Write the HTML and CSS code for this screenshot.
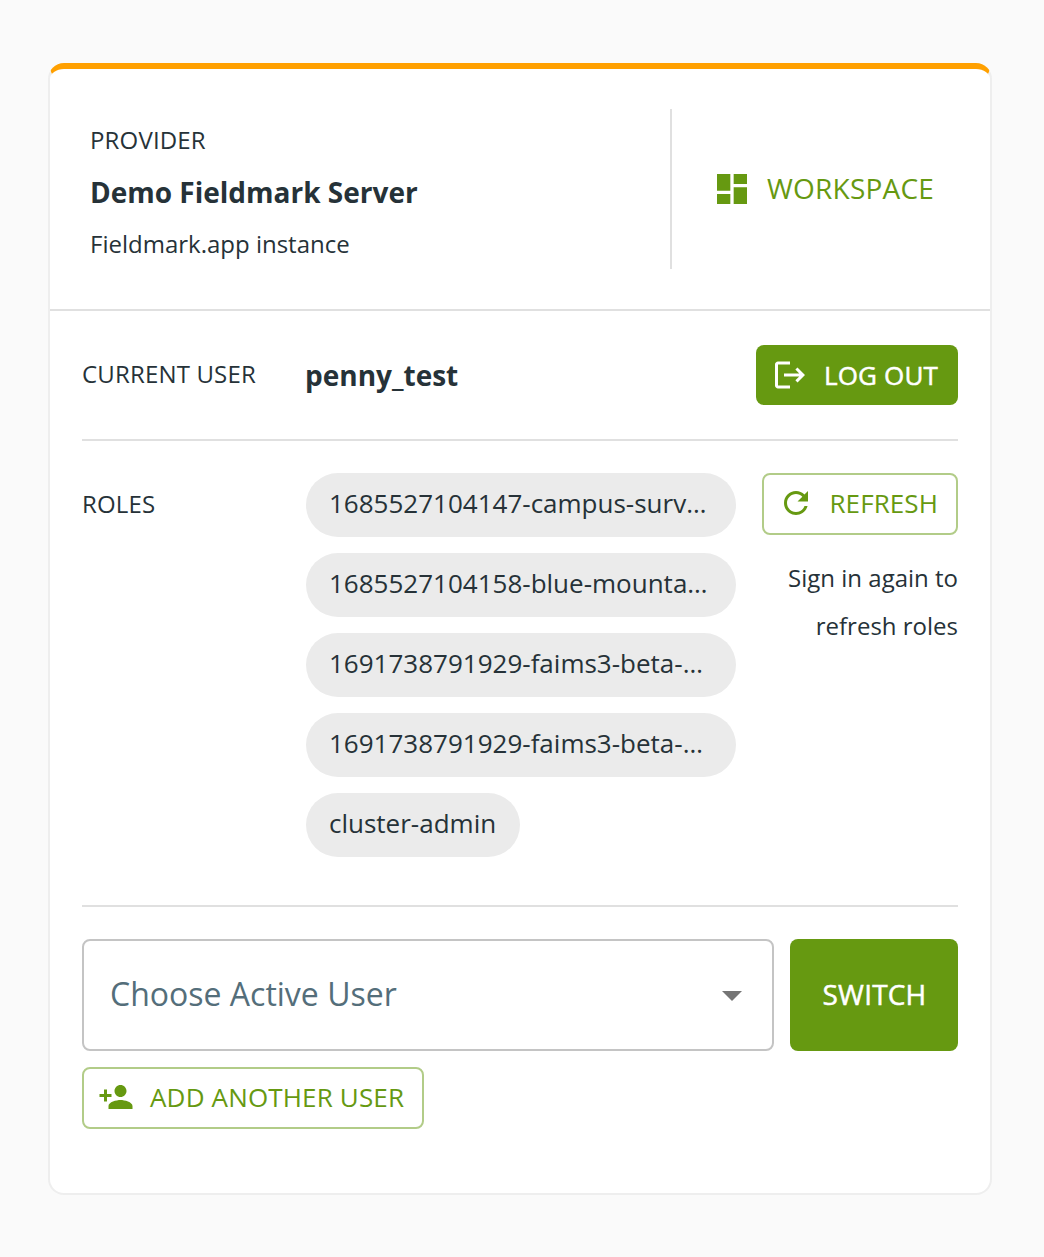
FILE: index.html
```html
<!DOCTYPE html>
<html lang="en">
<head>
<meta charset="utf-8">
<title>Demo Fieldmark Server</title>
<link rel="stylesheet" href="styles.css">
</head>
<body>
<main class="card">
  <header class="card-header">
    <div class="provider">
      <span class="label">PROVIDER</span>
      <h1 class="provider-name">Demo Fieldmark Server</h1>
      <span class="provider-note">Fieldmark.app instance</span>
    </div>
    <a class="workspace">
      <svg class="icon-lg" viewBox="0 0 24 24"><path d="M3 13h8V3H3v10zm0 8h8v-6H3v6zm10 0h8V11h-8v10zm0-18v6h8V3h-8z"/></svg>
      <span class="workspace-text">WORKSPACE</span>
    </a>
  </header>
  <div class="card-body">
    <section class="row user-row">
      <span class="label user-label">CURRENT USER</span>
      <strong class="username">penny_test</strong>
      <button class="btn btn-filled">
        <svg class="icon" viewBox="0 0 24 24"><path d="m17 7-1.41 1.41L18.17 11H8v2h10.17l-2.58 2.58L17 17l5-5zM4 5h8V3H4c-1.1 0-2 .9-2 2v14c0 1.1.9 2 2 2h8v-2H4V5z"/></svg>
        <span>LOG OUT</span>
      </button>
    </section>
    <section class="row roles-row">
      <span class="label roles-label">ROLES</span>
      <ul class="chips">
        <li class="chip chip-full">1685527104147-campus-surv…</li>
        <li class="chip chip-full">1685527104158-blue-mounta…</li>
        <li class="chip chip-full">1691738791929-faims3-beta-…</li>
        <li class="chip chip-full">1691738791929-faims3-beta-…</li>
        <li class="chip">cluster-admin</li>
      </ul>
      <div class="refresh">
        <button class="btn btn-outlined">
          <svg class="icon" viewBox="0 0 24 24"><path d="M17.65 6.35C16.2 4.9 14.21 4 12 4c-4.42 0-7.99 3.58-7.99 8s3.57 8 7.99 8c3.73 0 6.84-2.55 7.73-6h-2.08c-.82 2.33-3.04 4-5.65 4-3.31 0-6-2.69-6-6s2.69-6 6-6c1.66 0 3.14.69 4.22 1.78L13 11h7V4l-2.35 2.35z"/></svg>
          <span>REFRESH</span>
        </button>
        <p class="hint">Sign in again to refresh roles</p>
      </div>
    </section>
    <section class="switcher">
      <div class="select">
        <span class="select-text">Choose Active User</span>
        <svg class="caret" viewBox="0 0 24 24"><path d="m7 10 5 5 5-5z"/></svg>
      </div>
      <button class="btn btn-filled btn-switch"><span>SWITCH</span></button>
    </section>
    <button class="btn btn-outlined btn-add">
      <svg class="icon" viewBox="0 0 24 24"><path d="M15 12c2.21 0 4-1.79 4-4s-1.79-4-4-4-4 1.79-4 4 1.79 4 4 4zm-9-2V7H4v3H1v2h3v3h2v-3h3v-2H6zm9 4c-2.67 0-8 1.34-8 4v2h16v-2c0-2.66-5.33-4-8-4z"/></svg>
      <span>ADD ANOTHER USER</span>
    </button>
  </div>
</main>
</body>
</html>
```
FILE: styles.css
```css
* { box-sizing: border-box; }

body {
  margin: 0;
  min-height: 1257px;
  padding: 63px 52px 62px 48px;
  background: #fafafa;
  color: #263238;
  font-family: "Open Sans", "Noto Sans", sans-serif;
  font-size: 24px;
}

.card {
  width: 944px;
  height: 1132px;
  background: #fff;
  border: 2px solid #eee;
  border-top: 6px solid #ffa000;
  border-radius: 16px;
}

.card-header {
  display: flex;
  height: 242px;
  padding: 40px 0;
  border-bottom: 2px solid #e0e0e0;
}

.provider {
  display: flex;
  flex-direction: column;
  justify-content: flex-start;
  width: 622px;
  padding: 5px 0 0 40px;
  border-right: 2px solid #e0e0e0;
}

.provider > * { line-height: 52px; }

.provider-name {
  margin: 0;
  font-size: 28px;
  font-weight: 700;
}

.label { letter-spacing: 0.17px; }

.workspace {
  display: flex;
  flex: 1;
  align-items: center;
  gap: 15px;
  padding-left: 40px;
  color: #669911;
  font-size: 28px;
  letter-spacing: 0.22px;
}

.workspace-text { padding-bottom: 2px; }

svg { display: block; flex: none; fill: currentColor; }
.icon { width: 36px; height: 36px; }
.icon-lg { width: 40px; height: 40px; }

.card-body { padding: 0 32px; }

.row {
  display: grid;
  grid-template-columns: 223px 431px 1fr;
  border-bottom: 2px solid #e0e0e0;
}

.user-row {
  align-items: center;
  height: 130px;
}

.user-label { padding-bottom: 3px; }
.username { padding-bottom: 1px; font-size: 28px; font-weight: 700; }
.user-row .btn { justify-self: end; }

.btn {
  display: flex;
  align-items: center;
  gap: 16px;
  height: 60px;
  padding: 0 20px 0 16px;
  border: 0;
  border-radius: 8px;
  font: 400 26px/44px "Open Sans", "Noto Sans", sans-serif;
  letter-spacing: 0.16px;
  white-space: nowrap;
}

.btn-filled {
  background: #669911;
  color: #fff;
  -webkit-text-stroke: 0.5px #fff;
}

.btn-outlined {
  height: 62px;
  padding: 0 18px 2px 14px;
  border: 2px solid #b2cc88;
  background: #fff;
  color: #669911;
}

.refresh .btn { gap: 15px; letter-spacing: 0.1px; }

.roles-row { height: 466px; padding-top: 32px; }
.roles-label { line-height: 62px; }

.chips {
  display: flex;
  flex-direction: column;
  align-items: flex-start;
  gap: 16px;
  margin: 0;
  padding: 0 0 0 1px;
  list-style: none;
}

.chip {
  height: 64px;
  padding: 0 24px 0 23px;
  border-radius: 32px;
  background: #ebebeb;
  font-size: 26px;
  line-height: 60px;
  white-space: nowrap;
}

.chip-full { width: 430px; }

.refresh {
  display: flex;
  flex-direction: column;
  align-items: flex-end;
}

.hint {
  width: 190px;
  margin: 19px 0 0;
  line-height: 48px;
  text-align: right;
}

.switcher {
  display: flex;
  gap: 16px;
  margin-top: 32px;
}

.select {
  display: flex;
  flex: 1;
  align-items: center;
  justify-content: space-between;
  height: 112px;
  padding: 0 16px 0 26px;
  border: 2px solid #c4c4c4;
  border-radius: 8px;
}

.select-text { padding-bottom: 4px; color: #546e7a; font-size: 32px; }
.caret { width: 48px; height: 48px; fill: #757575; }

.btn-switch {
  justify-content: center;
  width: 168px;
  height: 112px;
  padding: 0 0 2px 1px;
  font-size: 28px;
  letter-spacing: 0.2px;
}

.btn-add { margin-top: 16px; }
```
